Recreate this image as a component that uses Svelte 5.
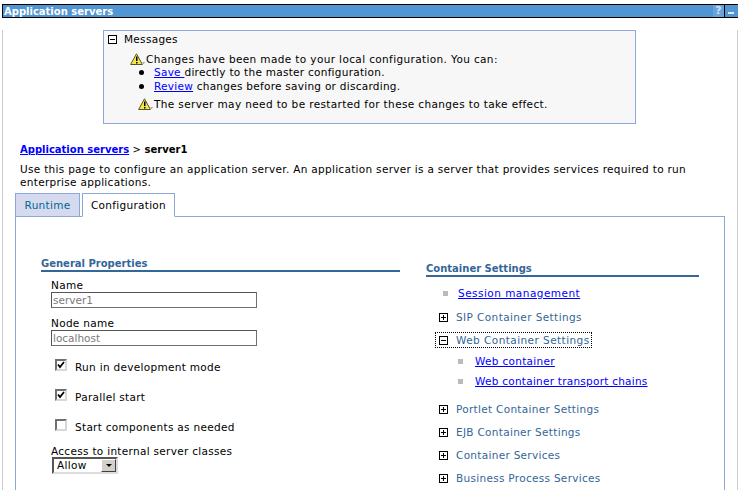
<script>
  const groupsA = ['SIP Container Settings'];
  const groupsB = ['Portlet Container Settings', 'EJB Container Settings', 'Container Services', 'Business Process Services'];
</script>

{#snippet warn()}
  <svg class="warn" width="16" height="13" viewBox="0 0 16 13">
    <path d="M6.5 .8 L12.4 11.5 H.6 Z" fill="#f2e84a" stroke="#55552a" stroke-width="1" />
    <path d="M12.5 9 L15.5 9.5 L13 11 Z" fill="#999" />
    <rect x="6" y="3.5" width="1.5" height="4.5" fill="#000" />
    <rect x="6" y="9" width="1.5" height="1.5" fill="#000" />
  </svg>
{/snippet}

{#snippet box(open)}
  <svg class="tw" width="9" height="9" viewBox="0 0 9 9">
    <rect x=".5" y=".5" width="8" height="8" fill="#fff" stroke="#000" />
    <rect x="2" y="4" width="5" height="1" fill="#000" />
    {#if !open}<rect x="4" y="2" width="1" height="5" fill="#000" />{/if}
  </svg>
{/snippet}

{#snippet tick()}
  <svg width="8" height="8" viewBox="0 0 8 8"><path d="M1 3.5 L3 6 L7 1" fill="none" stroke="#000" stroke-width="1.8" /></svg>
{/snippet}

<div class="page">
  <header class="bar">
    <span class="title">Application servers</span>
    <span class="tools">
      <span class="help">?</span>
      <span class="min"><i></i></span>
    </span>
  </header>

  <div class="content">
    <section class="messages">
      <div class="mhead">{@render box(true)}<span>Messages</span></div>
      <div class="mline first">{@render warn()}<span>Changes have been made to your local configuration. You can:</span></div>
      <div class="mitem"><b></b><span><a href="#a">Save&nbsp;</a>directly to the master configuration.</span></div>
      <div class="mitem"><b></b><span><a href="#a">Review</a> changes before saving or discarding.</span></div>
      <div class="mline second">{@render warn()}<span>The server may need to be restarted for these changes to take effect.</span></div>
    </section>

    <div class="crumb"><a href="#a">Application servers</a> <span class="gt">&gt;</span> server1</div>
    <p class="desc">Use this page to configure an application server. An application server is a server that provides services required to run<br />enterprise applications.</p>

    <nav class="tabs">
      <span class="tab off">Runtime</span>
      <span class="tab on">Configuration</span>
    </nav>

    <div class="panel">
      <div class="left">
        <h2 class="gp">General Properties</h2>
        <div class="fields">
          <label class="fl" for="n">Name</label>
          <input id="n" class="txt" value="server1" readonly />
          <label class="fl second-label" for="nn">Node name</label>
          <input id="nn" class="txt" value="localhost" readonly />
          <div class="check c1"><span class="cb">{@render tick()}</span>Run in development mode</div>
          <div class="check"><span class="cb">{@render tick()}</span>Parallel start</div>
          <div class="check"><span class="cb"></span>Start components as needed</div>
          <div class="fl access">Access to internal server classes</div>
          <div class="select"><span class="val">Allow</span><span class="arrow"><i></i></span></div>
        </div>
      </div>
      <div class="right">
        <h2 class="cs">Container Settings</h2>
        <div class="link top"><b></b><a href="#a">Session management</a></div>
        {#each groupsA as g}
          <div class="group g1">{@render box(false)}<span>{g}</span></div>
        {/each}
        <div class="group focus">{@render box(true)}<span>Web Container Settings</span></div>
        <div class="link sub s1"><b></b><a href="#a">Web container</a></div>
        <div class="link sub s2"><b></b><a href="#a">Web container transport chains</a></div>
        {#each groupsB as g, i}
          <div class="group" class:after={i === 0}>{@render box(false)}<span>{g}</span></div>
        {/each}
      </div>
    </div>
  </div>
</div>

<style>
  :global(body) { margin: 0; background: #fff; }
  .page {
    width: 738px; height: 490px; overflow: hidden; box-sizing: border-box; padding-top: 4px;
    font: 10.5px/13px "DejaVu Sans", Verdana, sans-serif; letter-spacing: .3px; color: #000;
  }
  a { color: #00f; text-decoration: underline; }
  .bar {
    margin-left: 2px; height: 12px; border: 1px solid #000; border-width: 1px 0; background: #5295d3;
    display: flex; justify-content: space-between; align-items: center; border-left: 1px solid #000;
  }
  .title { color: #fff; font-weight: 700; font-size: 10px; letter-spacing: 0; padding-left: 1px; }
  .tools { display: flex; height: 100%; align-items: stretch; }
  .help { color: #cfe2f5; background: #6aa3da; font-weight: 700; width: 11px; line-height: 12px; text-align: center; font-size: 11px; letter-spacing: 0; }
  .min { width: 13px; border-left: 1px solid #000; position: relative; display: block; }
  .min i { position: absolute; left: 3px; bottom: 3px; width: 6px; height: 2px; background: #dbe9f6; }
  .content { margin-left: 2px; border-left: 1px solid #ccc; border-right: 1px solid #ccc; height: 480px; }

  .messages {
    margin: 12px 0 0 100px; width: 531px; height: 92px; background: #f7f7f7; border: 1px solid #8ba8d8;
  }
  .mhead { display: flex; align-items: center; gap: 7px; margin: 2px 0 0 4px; height: 13px; }
  .tw { flex: none; display: block; }
  .mline { display: flex; align-items: center; height: 13px; letter-spacing: .37px; }
  .mline.first { margin: 7px 0 0 26px; }
  .mline.second { margin: 5px 0 0 34px; }
  .mitem { display: flex; align-items: center; height: 13px; margin: 0 0 0 35px; letter-spacing: .27px; }
  .mitem + .mitem { margin-top: 1px; }
  .mitem b { width: 5px; height: 5px; border-radius: 50%; background: #000; margin-right: 10px; }
  .warn { flex: none; }

  .crumb { margin: 19px 0 0 17px; font-weight: 700; font-size: 10px; letter-spacing: 0; }
  .crumb a { font-weight: 700; }
  .gt { font-weight: 400; }
  .desc { margin: 7px 0 0 17px; line-height: 13px; width: 700px; }

  .tabs { display: flex; gap: 2px; margin: 4px 0 0 12px; height: 24px; position: relative; z-index: 1; }
  .tab { box-sizing: border-box; height: 24px; border: 1px solid #8ba8d8; display: flex; align-items: center; justify-content: center; }
  .tab.off { width: 65px; background: #d5daee; color: #006699; }
  .tab.on { width: 93px; background: #fff; border-bottom-color: #fff; }

  .panel {
    margin: -1px 0 0 12px; width: 710px; height: 300px; border: 1px solid #8ba8d8; box-sizing: border-box;
    display: flex; align-items: flex-start;
  }
  .left { width: 359px; margin: 41px 0 0 25px; }
  .right { width: 273px; margin: 46px 0 0 26px; }
  h2 {
    margin: 0; font-size: 10px; line-height: 12px; letter-spacing: 0; font-weight: 700; color: #336699;
    border-bottom: 2px solid #336699;
  }
  .fields { padding-left: 10px; }
  .fl { display: block; height: 12px; line-height: 12px; }
  .fields > label:first-child { margin-top: 7px; }
  .second-label { margin-top: 9px; }
  .txt {
    display: block; box-sizing: border-box; width: 206px; height: 16px; margin: 1px 0 0; padding: 0 1px;
    border: 1px solid #6f6f6f; font: inherit; font-size: 10.5px; color: #7a7a7a; background: #fff; outline: none;
    border-top-color: #555; border-left-color: #555;
  }
  .check { display: flex; align-items: center; height: 13px; margin-top: 17px; padding-left: 4px; }
  .check.c1 { margin-top: 15px; }
  .cb {
    flex: none; width: 12px; height: 12px; box-sizing: border-box; border: 2px solid; border-color: #707070 #d8d8d8 #d8d8d8 #707070;
    margin-right: 8px; display: flex; align-items: center; justify-content: center; background: #fff; position: relative; top: -3px;
  }
  .access { margin-top: 11px; }
  .select {
    box-sizing: border-box; width: 66px; height: 17px; margin: 0 0 0 1px; border: 2px solid; border-color: #555 #ddd #ddd #555;
    display: flex; align-items: center; justify-content: space-between;
  }
  .val { padding-left: 3px; color: #000; }
  .arrow {
    width: 15px; height: 13px; background: #d4d0c8; border: 1px solid; border-color: #fff #404040 #404040 #fff; box-sizing: border-box;
    display: flex; align-items: center; justify-content: center;
  }
  .arrow i { border: 3px solid transparent; border-top-color: #000; border-bottom: 0; display: block; }

  .link { display: flex; align-items: center; height: 13px; }
  .link b { width: 5px; height: 5px; background: #bbb; flex: none; }
  .link.top { margin: 10px 0 0 17px; letter-spacing: .47px; }
  .link.top b { margin-right: 10px; }
  .group { display: flex; align-items: center; height: 13px; margin: 10px 0 0 13px; color: #336699; gap: 8px; }
  .group.g1 { margin-top: 11px; letter-spacing: .4px; }
  .group.focus { outline: 1px dotted #000; height: 14px; margin: 9px 0 0 10px; padding-left: 3px; width: 155px; box-sizing: border-box; letter-spacing: .44px; }
  .link.sub { margin-left: 32px; }
  .link.sub b { margin-right: 12px; }
  .s1 { margin-top: 8px; }
  .s2 { margin-top: 7px; letter-spacing: .25px; }
  .group.after { margin-top: 15px; }
</style>
